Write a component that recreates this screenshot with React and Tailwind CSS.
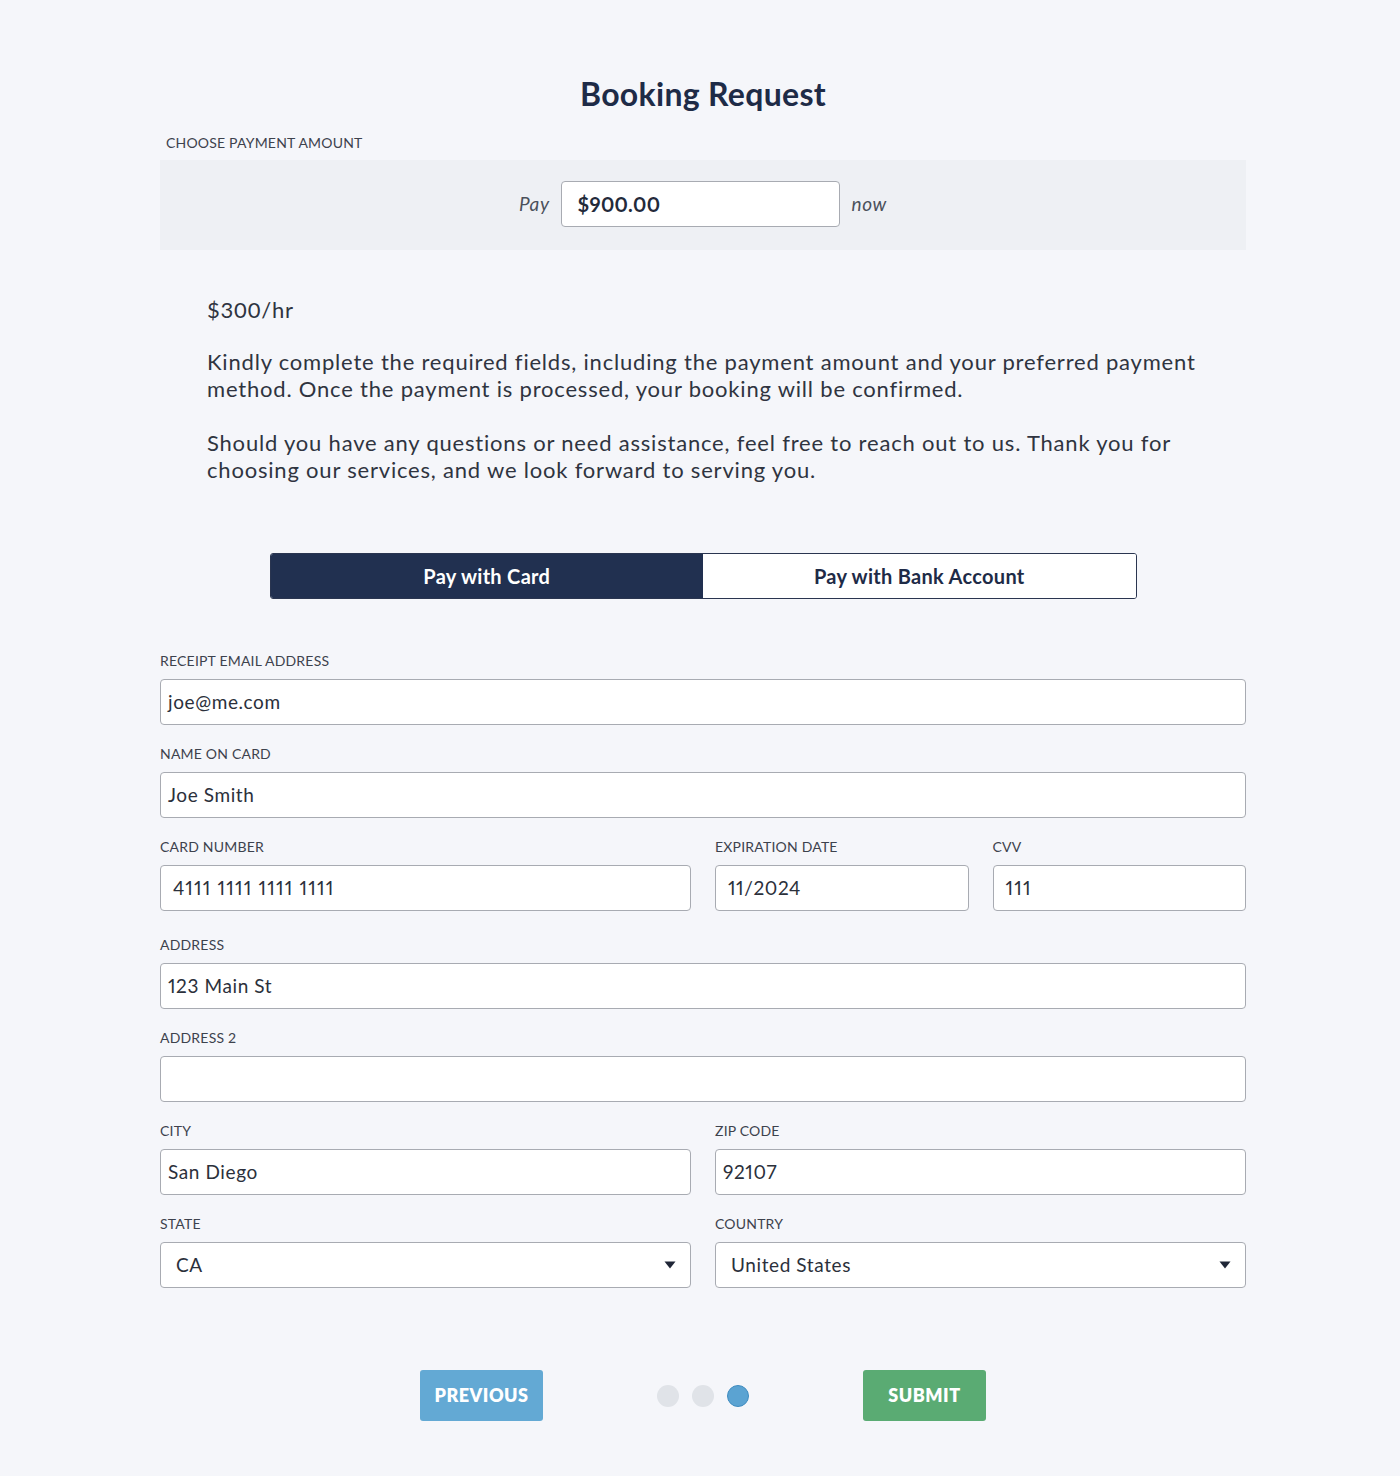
const Label = ({ children }) => (
  <div className="text-[14px] leading-[18px] mb-[9px] text-[#3d424d] tracking-[0.2px] uppercase">
    {children}
  </div>
);

const Field = ({ label, value, pad = "pl-[7px]", num = false }) => (
  <div>
    <Label>{label}</Label>
    <div
      className={`h-[46px] flex items-center bg-white border border-[#a8abb2] rounded-[4px] ${pad} text-[19px] text-[#2b303b] ${
        num ? "tracking-[1.2px]" : "tracking-[0.6px]"
      } proportional-nums`}
    >
      {value}
    </div>
  </div>
);

const Select = ({ label, value }) => (
  <div>
    <Label>{label}</Label>
    <div className="h-[46px] flex items-center justify-between bg-white border border-[#a8abb2] rounded-[4px] pl-[15px] pr-[14px] text-[19px] text-[#2b303b] tracking-[0.6px]">
      <span>{value}</span>
      <svg width="12" height="8" viewBox="0 0 12 8">
        <path d="M0.5 0.5 L11.5 0.5 L6 7.5 Z" fill="#1f2637" />
      </svg>
    </div>
  </div>
);

export default function App() {
  return (
    <div
      className="min-h-screen bg-[#f5f6fa] pt-[74px] pb-[54px]"
      style={{ fontFamily: "Lato, 'Open Sans', sans-serif" }}
    >
      <div className="ml-[160px] w-[1086px]">
        <h1 className="text-center text-[32px] leading-[40px] font-bold text-[#1e2b47] tracking-[0.3px]">
          Booking Request
        </h1>

        {/* payment amount */}
        <div className="mt-5 pl-[6px] text-[14px] leading-[18px] text-[#3d424d] tracking-[0.2px]">
          CHOOSE PAYMENT AMOUNT
        </div>
        <div className="mt-2 h-[90px] bg-[#eef0f4] flex items-center justify-center pb-[2px]">
          <span className="italic text-[19px] text-[#4b505b] tracking-[0.6px] mr-[11px]">Pay</span>
          <div className="w-[279px] h-[46px] bg-white border border-[#a8abb2] rounded-[4px] flex items-center pl-[16px] text-[20px] font-bold text-[#232a3a] tracking-[0.3px] proportional-nums">
            $900.00
          </div>
          <span className="italic text-[19px] text-[#4b505b] tracking-[0.6px] ml-[12px]">now</span>
        </div>

        {/* intro text */}
        <div className="mt-[46px] pl-[47px] pr-[30px] text-[22px] text-[#2f3440] tracking-[0.8px]">
          <p className="leading-[28px]">$300/hr</p>
          <p className="mt-[24px] leading-[27px]">
            Kindly complete the required fields, including the payment amount and your preferred payment
            method. Once the payment is processed, your booking will be confirmed.
          </p>
          <p className="mt-[27px] leading-[27px]">
            Should you have any questions or need assistance, feel free to reach out to us. Thank you for
            choosing our services, and we look forward to serving you.
          </p>
        </div>

        {/* method toggle */}
        <div className="mt-[70px] mx-auto w-[867px] h-[46px] grid grid-cols-2 border border-[#2a3550] rounded-[3px] overflow-hidden">
          <button className="bg-[#213050] text-white text-[20px] font-bold tracking-[0.3px]">Pay with Card</button>
          <button className="bg-white text-[#1e2b47] text-[20px] font-bold tracking-[0.3px]">Pay with Bank Account</button>
        </div>

        {/* form */}
        <div className="mt-[53px] flex flex-col gap-[20px]">
          <Field label="Receipt Email Address" value="joe@me.com" />
          <Field label="Name on Card" value="Joe Smith" />
          <div className="grid grid-cols-2 gap-6">
            <Field label="Card Number" value="4111 1111 1111 1111" pad="pl-[12px]" num />
            <div className="grid grid-cols-2 gap-6">
              <Field label="Expiration Date" value="11/2024" pad="pl-[12px]" />
              <Field label="CVV" value="111" pad="pl-[12px]" num />
            </div>
          </div>
          <div className="mt-[5px]">
            <Field label="Address" value="123 Main St" />
          </div>
          <Field label="Address 2" value="" />
          <div className="grid grid-cols-2 gap-6">
            <Field label="City" value="San Diego" />
            <Field label="Zip Code" value="92107" />
          </div>
          <div className="grid grid-cols-2 gap-6">
            <Select label="State" value="CA" />
            <Select label="Country" value="United States" />
          </div>
        </div>

        {/* nav */}
        <div className="mt-[82px] flex items-center justify-center gap-[114px]">
          <button className="w-[123px] h-[51px] rounded-[3px] bg-[#63a9d4] text-white text-[18px] font-extrabold tracking-[0.5px]">
            PREVIOUS
          </button>
          <div className="flex items-center gap-[13px]">
            <span className="w-[22px] h-[22px] rounded-full bg-[#e0e3e8]" />
            <span className="w-[22px] h-[22px] rounded-full bg-[#e0e3e8]" />
            <span className="w-[22px] h-[22px] rounded-full bg-[#5ba3d2] border border-[#3f8cc0]" />
          </div>
          <button className="w-[123px] h-[51px] rounded-[3px] bg-[#5aab73] text-white text-[18px] font-extrabold tracking-[0.5px]">
            SUBMIT
          </button>
        </div>
      </div>
    </div>
  );
}
